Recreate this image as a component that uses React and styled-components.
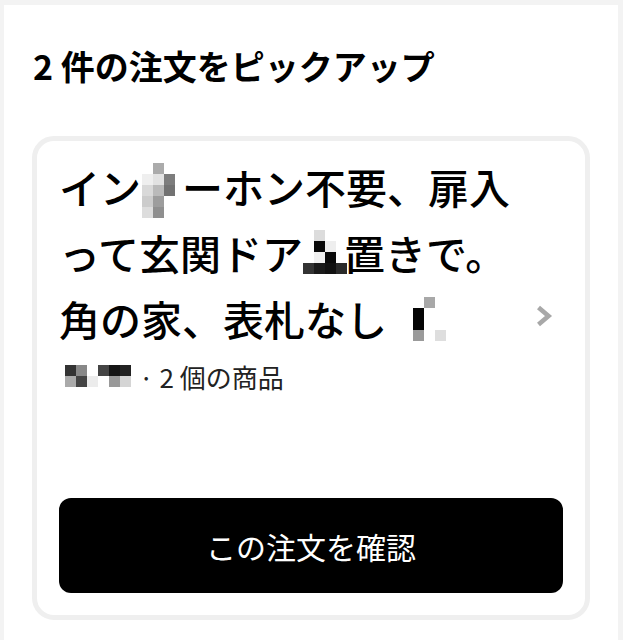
import React from "react";
import styled, { createGlobalStyle } from "styled-components";

const GlobalStyle = createGlobalStyle`
  html, body {
    margin: 0;
    padding: 0;
    background: #f3f3f3;
  }
  body {
    font-family: "Noto Sans CJK JP", "Noto Sans", sans-serif;
    color: #000;
  }
`;

const Panel = styled.main`
  margin: 5px 5px 0 4px;
  min-height: calc(100vh - 5px);
  background: #fff;
  padding: 37px 28px 0 28px;
  box-sizing: border-box;
`;

const Heading = styled.h1`
  margin: 0 0 46px 1px;
  font-size: 34px;
  line-height: 48px;
  font-weight: 600;
  color: #000;
`;

const Card = styled.section`
  border: 5px solid #efefef;
  border-radius: 22px;
  padding: 0 22px 22px;
  display: flex;
  flex-direction: column;
  background: #fff;
`;

const TopRow = styled.div`
  min-height: 349px;
  display: flex;
  align-items: center;
  gap: 12px;
  padding-right: 10px;
`;

const Info = styled.div`
  flex: 1;
  align-self: flex-start;
  padding-top: 12px;
  min-width: 0;
`;

const Note = styled.p`
  margin: 0;
  font-size: 41px;
  line-height: 66px;
  font-weight: 500;
  color: #000;
  line-break: loose;
`;

const Meta = styled.p`
  margin: 8px 0 0;
  font-size: 26px;
  line-height: 36px;
  font-weight: 400;
  color: #222;
`;

const MosaicGrid = styled.span`
  display: inline-grid;
  vertical-align: top;
  grid-template-columns: repeat(${(p) => p.$cols}, ${(p) => p.$cell}px);
  grid-auto-rows: ${(p) => p.$cell}px;
  padding-left: ${(p) => p.$padLeft}px;
  margin-right: ${(p) => p.$padRight}px;
  transform: translateY(${(p) => p.$shift}px);
`;

const Cell = styled.span`
  display: block;
  background: ${(p) => p.$color || "transparent"};
`;

function Mosaic({ rows, cell = 11, padLeft = 0, padRight = 0, shift = 0 }) {
  return (
    <MosaicGrid
      aria-hidden="true"
      $cols={rows[0].length}
      $cell={cell}
      $padLeft={padLeft}
      $padRight={padRight}
      $shift={shift}
    >
      {rows.flat().map((c, i) => (
        <Cell key={i} $color={c} />
      ))}
    </MosaicGrid>
  );
}

const mosaicA = [
  ["", "#ababab", ""],
  ["#efefef", "#e2e2e2", "#7d7d7d"],
  ["#d9d9d9", "#bababa", "#727272"],
  ["#cccccc", "#9d9d9d", ""],
  ["#dddddd", "#8f8f8f", ""],
];

const mosaicB = [
  ["", "#dcdcdc", "", ""],
  ["", "#0a0a0a", "#eeeeee", ""],
  ["", "#f0f0f0", "#0a0a0a", ""],
  ["#333333", "#1a1a1a", "#111111", "#2a2a2a"],
];

const mosaicC = [
  ["", "#a8a8a8", ""],
  ["#050505", "", ""],
  ["#050505", "", ""],
  ["#9a9a9a", "", "#dedede"],
];

const mosaicD = [
  ["#333333", "#888888", "#ffffff", "#444444", "#151515", "#222222"],
  ["#aaaaaa", "#444444", "#ececec", "#ffffff", "#999999", "#d5d5d5"],
];

const Chevron = styled.svg`
  flex: none;
  width: 18px;
  height: 24px;
  display: block;
`;

const ConfirmButton = styled.button`
  margin-top: 8px;
  height: 95px;
  width: 100%;
  border: none;
  border-radius: 12px;
  background: #000;
  color: #fff;
  font-family: "Noto Sans CJK JP", "Noto Sans", sans-serif;
  font-size: 30px;
  font-weight: 400;
  display: flex;
  align-items: center;
  justify-content: center;
  cursor: pointer;
`;

export default function App() {
  return (
    <>
      <GlobalStyle />
      <Panel>
        <Heading>2 件の注文をピックアップ</Heading>
        <Card>
          <TopRow>
            <Info>
              <Note>
                イン
                <Mosaic rows={mosaicA} cell={11} padLeft={1} padRight={7} shift={10} />
                ーホン不要、扉入って玄関ドア
                <Mosaic rows={mosaicB} cell={11} padLeft={0} padRight={-3} shift={11} />
                置きで。角の家、表札なし{" "}
                <Mosaic rows={mosaicC} cell={11} padLeft={17} shift={12} />
              </Note>
              <Meta>
                <Mosaic rows={mosaicD} cell={11} padLeft={6} padRight={8} shift={6} />
                · 2 個の商品
              </Meta>
            </Info>
            <Chevron viewBox="0 0 18 24" aria-hidden="true">
              <path
                d="M3.5 3.5 L13.5 12 L3.5 20.5"
                fill="none"
                stroke="#a8a8a8"
                strokeWidth="4.6"
                strokeLinejoin="miter"
              />
            </Chevron>
          </TopRow>
          <ConfirmButton type="button">この注文を確認</ConfirmButton>
        </Card>
      </Panel>
    </>
  );
}
